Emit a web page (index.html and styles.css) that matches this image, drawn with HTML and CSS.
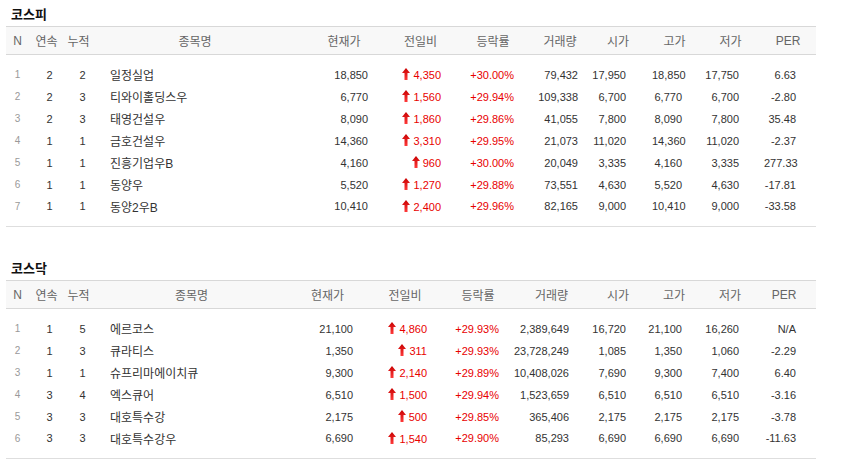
FILE: index.html
```html
<!DOCTYPE html>
<html lang="ko">
<head>
<meta charset="utf-8">
<title>상한가</title>
<link rel="stylesheet" href="styles.css">
</head>
<body>
<svg width="0" height="0" class="defs" aria-hidden="true">
  <defs>
    <linearGradient id="upg" x1="0" y1="0" x2="0" y2="1">
      <stop offset="0" stop-color="#c80000"/>
      <stop offset="1" stop-color="#ff3a3a"/>
    </linearGradient>
    <symbol id="up" viewBox="0 0 8 12">
      <path d="M4 0 L8 5 L5.5 5 L5.5 12 L2.5 12 L2.5 5 L0 5 Z" fill="url(#upg)"/>
    </symbol>
  </defs>
</svg>

<div class="page">
  <section class="market kospi">
    <h2 class="title">코스피</h2>
    <table class="stocks">
      <colgroup>
        <col class="w-n"><col class="w-a"><col class="w-b">
        <col style="width:204px"><col style="width:94px"><col style="width:59px">
        <col style="width:86px"><col style="width:48px"><col style="width:68px">
        <col style="width:45px"><col style="width:67px"><col style="width:52px">
      </colgroup>
      <thead>
        <tr><th>N</th><th>연속</th><th>누적</th><th>종목명</th><th>현재가</th><th>전일비</th><th>등락률</th><th>거래량</th><th>시가</th><th>고가</th><th>저가</th><th class="per">PER</th></tr>
      </thead>
      <tbody>
        <tr><td>1</td><td>2</td><td>2</td><td>일정실업</td><td>18,850</td><td><svg class="arr"><use href="#up"/></svg>4,350</td><td>+30.00%</td><td>79,432</td><td>17,950</td><td>18,850</td><td>17,750</td><td>6.63</td></tr>
        <tr><td>2</td><td>2</td><td>3</td><td>티와이홀딩스우</td><td>6,770</td><td><svg class="arr"><use href="#up"/></svg>1,560</td><td>+29.94%</td><td>109,338</td><td>6,700</td><td>6,770</td><td>6,700</td><td>-2.80</td></tr>
        <tr><td>3</td><td>2</td><td>3</td><td>태영건설우</td><td>8,090</td><td><svg class="arr"><use href="#up"/></svg>1,860</td><td>+29.86%</td><td>41,055</td><td>7,800</td><td>8,090</td><td>7,800</td><td>35.48</td></tr>
        <tr><td>4</td><td>1</td><td>1</td><td>금호건설우</td><td>14,360</td><td><svg class="arr"><use href="#up"/></svg>3,310</td><td>+29.95%</td><td>21,073</td><td>11,020</td><td>14,360</td><td>11,020</td><td>-2.37</td></tr>
        <tr><td>5</td><td>1</td><td>1</td><td>진흥기업우B</td><td>4,160</td><td><svg class="arr"><use href="#up"/></svg>960</td><td>+30.00%</td><td>20,049</td><td>3,335</td><td>4,160</td><td>3,335</td><td>277.33</td></tr>
        <tr><td>6</td><td>1</td><td>1</td><td>동양우</td><td>5,520</td><td><svg class="arr"><use href="#up"/></svg>1,270</td><td>+29.88%</td><td>73,551</td><td>4,630</td><td>5,520</td><td>4,630</td><td>-17.81</td></tr>
        <tr><td>7</td><td>1</td><td>1</td><td>동양2우B</td><td>10,410</td><td><svg class="arr"><use href="#up"/></svg>2,400</td><td>+29.96%</td><td>82,165</td><td>9,000</td><td>10,410</td><td>9,000</td><td>-33.58</td></tr>
      </tbody>
    </table>
  </section>

  <section class="market kosdaq">
    <h2 class="title">코스닥</h2>
    <table class="stocks">
      <colgroup>
        <col class="w-n"><col class="w-a"><col class="w-b">
        <col style="width:197px"><col style="width:75px"><col style="width:80px">
        <col style="width:66px"><col style="width:81px"><col style="width:52px">
        <col style="width:60px"><col style="width:52px"><col style="width:60px">
      </colgroup>
      <thead>
        <tr><th>N</th><th>연속</th><th>누적</th><th>종목명</th><th>현재가</th><th>전일비</th><th>등락률</th><th>거래량</th><th>시가</th><th>고가</th><th>저가</th><th class="per">PER</th></tr>
      </thead>
      <tbody>
        <tr><td>1</td><td>1</td><td>5</td><td>에르코스</td><td>21,100</td><td><svg class="arr"><use href="#up"/></svg>4,860</td><td>+29.93%</td><td>2,389,649</td><td>16,720</td><td>21,100</td><td>16,260</td><td>N/A</td></tr>
        <tr><td>2</td><td>1</td><td>3</td><td>큐라티스</td><td>1,350</td><td><svg class="arr"><use href="#up"/></svg>311</td><td>+29.93%</td><td>23,728,249</td><td>1,085</td><td>1,350</td><td>1,060</td><td>-2.29</td></tr>
        <tr><td>3</td><td>1</td><td>1</td><td>슈프리마에이치큐</td><td>9,300</td><td><svg class="arr"><use href="#up"/></svg>2,140</td><td>+29.89%</td><td>10,408,026</td><td>7,690</td><td>9,300</td><td>7,400</td><td>6.40</td></tr>
        <tr><td>4</td><td>3</td><td>4</td><td>엑스큐어</td><td>6,510</td><td><svg class="arr"><use href="#up"/></svg>1,500</td><td>+29.94%</td><td>1,523,659</td><td>6,510</td><td>6,510</td><td>6,510</td><td>-3.16</td></tr>
        <tr><td>5</td><td>3</td><td>3</td><td>대호특수강</td><td>2,175</td><td><svg class="arr"><use href="#up"/></svg>500</td><td>+29.85%</td><td>365,406</td><td>2,175</td><td>2,175</td><td>2,175</td><td>-3.78</td></tr>
        <tr><td>6</td><td>3</td><td>3</td><td>대호특수강우</td><td>6,690</td><td><svg class="arr"><use href="#up"/></svg>1,540</td><td>+29.90%</td><td>85,293</td><td>6,690</td><td>6,690</td><td>6,690</td><td>-11.63</td></tr>
      </tbody>
    </table>
  </section>
</div>
</body>
</html>
```

FILE: styles.css
```css
* { box-sizing: border-box; }

html, body {
  margin: 0;
  padding: 0;
  background: #fff;
}

body {
  font-family: "Liberation Sans", "Noto Sans CJK KR", sans-serif;
  color: #333;
}

.defs {
  position: absolute;
  width: 0;
  height: 0;
  overflow: hidden;
}

.page {
  width: 822px;
  padding: 3px 0 0 6px;
}

.market + .market {
  margin-top: 30px;
}

.title {
  margin: 0;
  padding-left: 5px;
  height: 23px;
  line-height: 23px;
  font-size: 13px;
  font-weight: bold;
  color: #111;
}

.stocks {
  width: 810px;
  table-layout: fixed;
  border-collapse: collapse;
  border-bottom: 1px solid #dedede;
}

.w-n { width: 23px; }
.w-a { width: 35px; }
.w-b { width: 29px; }

.stocks th {
  height: 28px;
  padding: 0;
  background: #f8f8f8;
  border-top: 1px solid #d8d8d8;
  border-bottom: 1px solid #d8d8d8;
  font-size: 12px;
  font-weight: normal;
  color: #666;
  text-align: center;
  white-space: nowrap;
}

.stocks th.per { padding-right: 4px; }

.stocks td {
  height: 22px;
  padding: 0;
  font-size: 11px;
  color: #333;
  text-align: right;
  white-space: nowrap;
  vertical-align: middle;
}

.stocks tbody tr:first-child td { height: 31px; padding-top: 9px; }
.stocks tbody tr:last-child td { height: 31px; padding-bottom: 9px; }

.stocks td:nth-child(1) {
  text-align: center;
  font-size: 10px;
  color: #999;
}
.stocks td:nth-child(2) { text-align: center; padding-left: 6px; }
.stocks td:nth-child(3) { text-align: center; padding-left: 8px; }
.stocks td:nth-child(4) {
  text-align: left;
  padding-left: 17px;
  font-size: 12px;
  color: #333;
}
.stocks td:nth-child(6),
.stocks td:nth-child(7) { color: #e80000; }

.arr {
  width: 8px;
  height: 12px;
  margin-right: 3px;
  vertical-align: -1px;
}

/* KOSPI column right paddings */
.kospi td:nth-child(5) { padding-right: 23px; }
.kospi td:nth-child(6) { padding-right: 9px; }
.kospi td:nth-child(7) { padding-right: 22px; }
.kospi td:nth-child(8) { padding-right: 6px; }
.kospi td:nth-child(9) { padding-right: 26px; }
.kospi td:nth-child(10) { padding-right: 15px; }
.kospi td:nth-child(11) { padding-right: 25px; }
.kospi td:nth-child(12) { padding-right: 20px; }

/* KOSDAQ column right paddings */
.kosdaq td:nth-child(5) { padding-right: 12px; }
.kosdaq td:nth-child(6) { padding-right: 18px; }
.kosdaq td:nth-child(7) { padding-right: 12px; }
.kosdaq td:nth-child(8) { padding-right: 23px; }
.kosdaq td:nth-child(9) { padding-right: 18px; }
.kosdaq td:nth-child(10) { padding-right: 22px; }
.kosdaq td:nth-child(11) { padding-right: 17px; }
.kosdaq td:nth-child(12) { padding-right: 20px; }
```
